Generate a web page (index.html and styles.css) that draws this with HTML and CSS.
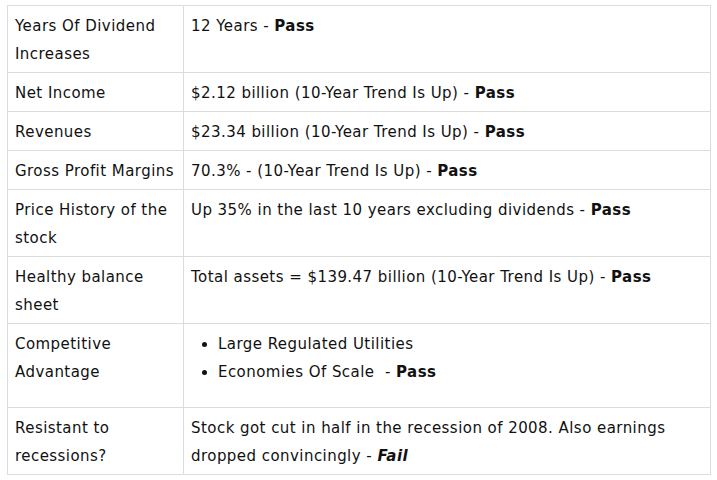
FILE: index.html
```html
<!DOCTYPE html>
<html>
<head>
<meta charset="utf-8">
<link rel="stylesheet" href="styles.css">
</head>
<body>
<table class="tbl">
  <colgroup><col class="c1"><col></colgroup>
  <tr><td>Years Of Dividend Increases</td><td>12 Years - <b>Pass</b></td></tr>
  <tr><td>Net Income</td><td>$2.12 billion (10-Year Trend Is Up) - <b>Pass</b></td></tr>
  <tr><td>Revenues</td><td>$23.34 billion (10-Year Trend Is Up) - <b>Pass</b></td></tr>
  <tr><td>Gross Profit Margins</td><td>70.3% - (10-Year Trend Is Up) - <b>Pass</b></td></tr>
  <tr><td>Price History of the stock</td><td>Up 35% in the last 10 years excluding dividends - <b>Pass</b></td></tr>
  <tr><td>Healthy balance sheet</td><td>Total assets = $139.47 billion (10-Year Trend Is Up) - <b>Pass</b></td></tr>
  <tr><td>Competitive Advantage</td><td><ul class="list"><li>Large Regulated Utilities</li><li>Economies Of Scale&nbsp; - <b>Pass</b></li></ul></td></tr>
  <tr><td>Resistant to recessions?</td><td>Stock got cut in half in the recession of 2008. Also earnings dropped convincingly - <b><i>Fail</i></b></td></tr>
</table>
</body>
</html>
```
FILE: styles.css
```css
html, body { margin: 0; padding: 0; background: #fff; }
body { font-family: Verdana, "DejaVu Sans", sans-serif; font-size: 15px; line-height: 28px; color: #111; letter-spacing: 0.45px; }
.tbl { border-collapse: collapse; width: 704px; margin: 5px 0 0 7px; }
.tbl .c1 { width: 176px; }
.tbl td { border: 1px solid #dcdcdc; padding: 6px 8px 4px 7px; vertical-align: top; }
.list { margin: 0 0 17px; padding-left: 27px; }
```
